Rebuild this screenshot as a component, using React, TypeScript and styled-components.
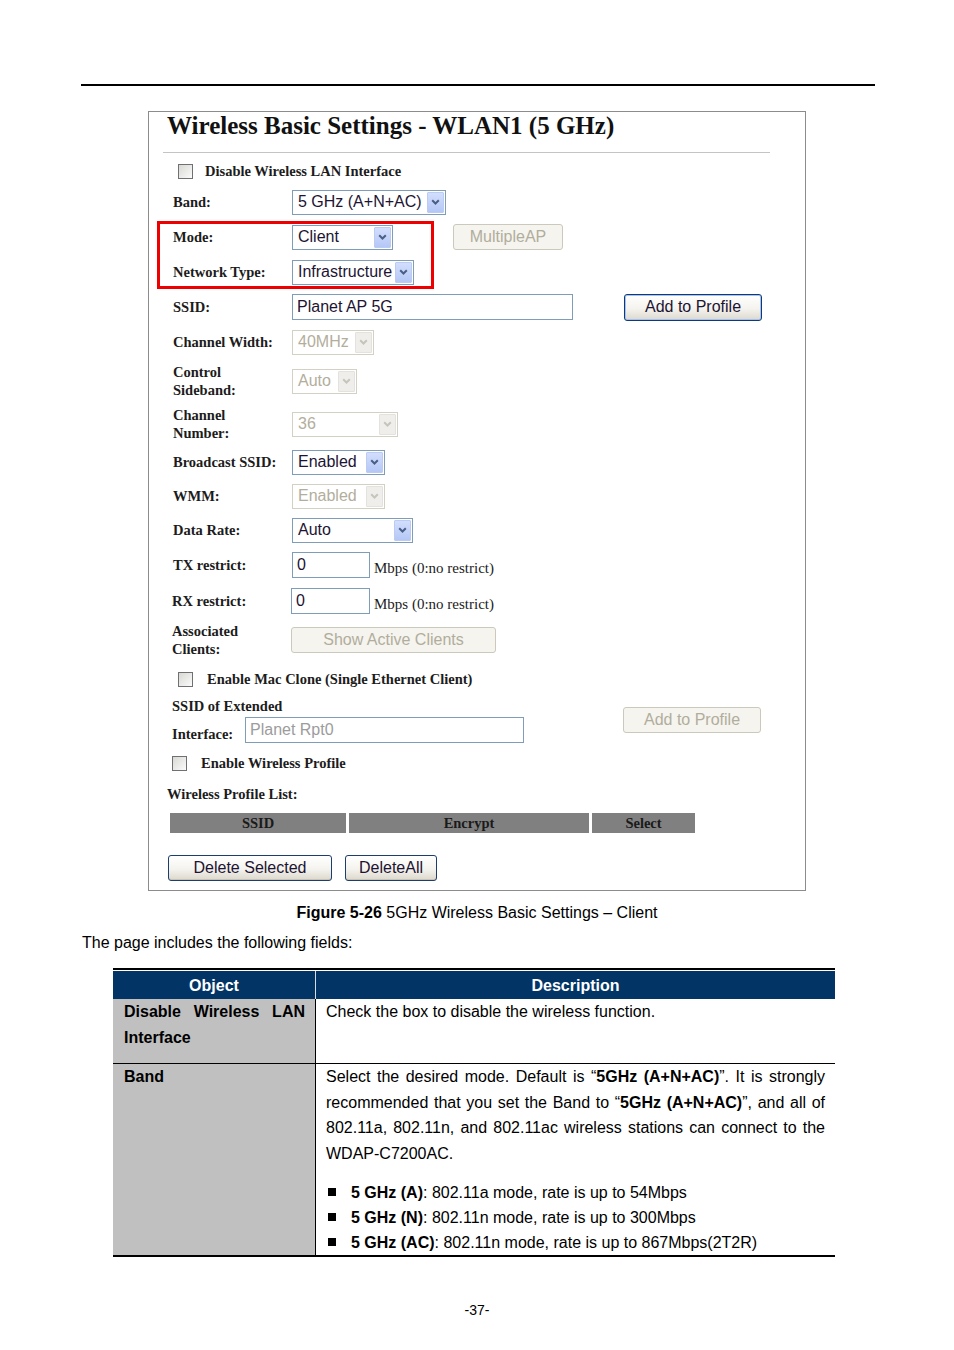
import React from "react";
import styled, { createGlobalStyle } from "styled-components";

const GlobalStyle = createGlobalStyle`
  html, body {
    margin: 0;
    padding: 0;
    background: #ffffff;
  }
  body {
    font-family: "Liberation Sans", Arial, sans-serif;
    color: #000;
  }
`;

const Page = styled.div`
  width: 954px;
  min-height: 1350px;
  padding-top: 84px;
  box-sizing: border-box;
`;

const TopRule = styled.div`
  margin-left: 81px;
  width: 794px;
  height: 2px;
  background: #000;
`;

/* ---------- screenshot panel ---------- */

const Panel = styled.div`
  margin: 25px 0 0 148px;
  width: 658px;
  height: 780px;
  box-sizing: border-box;
  border: 1px solid #8c8c8c;
  font-family: "Liberation Serif", "Times New Roman", serif;
  color: #1c1c1c;
`;

const Title = styled.h1`
  margin: 0;
  padding-left: 18px;
  font-size: 25px;
  line-height: 28px;
  font-weight: bold;
  color: #111;
`;

const TitleRule = styled.div`
  margin: 12px 0 0 14px;
  width: 607px;
  height: 1px;
  background: #c4c4c4;
`;

const Row = styled.div<{ $gap: number; $h?: number; $pad?: number }>`
  display: flex;
  align-items: center;
  margin-top: ${(p) => p.$gap}px;
  height: ${(p) => p.$h ?? 26}px;
  padding-left: ${(p) => p.$pad ?? 24}px;
`;

const Label = styled.div`
  width: 119px;
  flex-shrink: 0;
  font-size: 14.5px;
  line-height: 18px;
  font-weight: bold;
`;

// red annotation frame drawn over the Mode / Network Type rows
const Highlight = styled.div`
  position: relative;
  padding-top: 9px;
  &::after {
    content: "";
    position: absolute;
    left: 8px;
    top: 6px;
    width: 277px;
    height: 68px;
    box-sizing: border-box;
    border: 3px solid #ee0000;
    pointer-events: none;
  }
`;

const SelectBox = styled.div<{ $w: number; $disabled?: boolean }>`
  width: ${(p) => p.$w}px;
  height: 25px;
  box-sizing: border-box;
  border: 1px solid ${(p) => (p.$disabled ? "#d3d1c4" : "#7f9db9")};
  background: #fff;
  display: flex;
  align-items: center;
  justify-content: space-between;
  padding: 0 1px 0 5px;
  font-family: "Liberation Sans", Arial, sans-serif;
  font-size: 16px;
  font-weight: normal;
  color: ${(p) => (p.$disabled ? "#b3ae9c" : "#1d1433")};
  white-space: nowrap;
`;

const ArrowBox = styled.span<{ $disabled?: boolean }>`
  width: 17px;
  height: 21px;
  box-sizing: border-box;
  border: 1px solid ${(p) => (p.$disabled ? "#e3e2dc" : "#bccbf1")};
  border-radius: 1px;
  background: ${(p) =>
    p.$disabled ? "#efeeea" : "linear-gradient(#d3defd, #b4c7f6)"};
  display: flex;
  align-items: center;
  justify-content: center;
  flex-shrink: 0;
`;

const TextInput = styled.div<{ $w: number; $muted?: boolean }>`
  width: ${(p) => p.$w}px;
  height: 26px;
  box-sizing: border-box;
  border: 1px solid #7f9db9;
  background: #fff;
  padding-left: 4px;
  display: flex;
  align-items: center;
  font-family: "Liberation Sans", Arial, sans-serif;
  font-size: 16px;
  font-weight: normal;
  line-height: 20px;
  color: ${(p) => (p.$muted ? "#9c9c9c" : "#1d1433")};
  flex-shrink: 0;
`;

const Button = styled.div<{ $w: number; $disabled?: boolean; $ml?: number }>`
  width: ${(p) => p.$w}px;
  height: 26px;
  margin-left: ${(p) => p.$ml ?? 0}px;
  box-sizing: border-box;
  border: 1px solid ${(p) => (p.$disabled ? "#cbc9bc" : "#1c3d6e")};
  border-radius: 3px;
  background: ${(p) =>
    p.$disabled
      ? "#f5f4ee"
      : "linear-gradient(#ffffff, #f4f3ee 55%, #dcd8cd)"};
  box-shadow: ${(p) =>
    p.$disabled ? "none" : "inset 0 -1px 0 #c9c4b6"};
  display: flex;
  align-items: center;
  justify-content: center;
  font-family: "Liberation Sans", Arial, sans-serif;
  font-size: 16px;
  font-weight: normal;
  color: ${(p) => (p.$disabled ? "#b1ad9d" : "#1d1433")};
  flex-shrink: 0;
`;

const DefaultButton = styled(Button)`
  height: 27px;
  border-color: #0d3a7a;
  box-shadow: inset 0 0 0 1px #a9c1ee;
`;

const Unit = styled.span`
  margin: 6px 0 0 4px;
  font-size: 15px;
`;

const CheckRow = styled.div<{ $gap: number; $indent: number; $space: number }>`
  display: flex;
  align-items: center;
  height: 26px;
  margin-top: ${(p) => p.$gap}px;
  padding-left: ${(p) => p.$indent}px;
  gap: ${(p) => p.$space}px;
  font-size: 14.5px;
  font-weight: bold;
`;

const CheckBox = styled.span`
  width: 15px;
  height: 15px;
  box-sizing: border-box;
  border: 1px solid #6e7072;
  background: linear-gradient(135deg, #d8d8d4, #fbfbfb);
`;

const ExtBlock = styled.div`
  display: flex;
  align-items: flex-start;
  margin-top: 5px;
  height: 52px;
  padding-left: 23px;
`;

const ExtFields = styled.div`
  display: flex;
  flex-direction: column;
  font-size: 14.5px;
  font-weight: bold;
  line-height: 18px;
`;

const ExtLine = styled.div`
  display: flex;
  align-items: flex-end;
  margin-top: 2px;
`;

const ExtLabel = styled.span`
  width: 73px;
`;

const ExtButtonWrap = styled.div`
  margin: 10px 0 0 99px;
`;

const ListLabel = styled.div`
  margin-top: 5px;
  height: 26px;
  line-height: 26px;
  padding-left: 18px;
  font-size: 14.5px;
  font-weight: bold;
`;

const ProfileHead = styled.div`
  display: flex;
  gap: 3px;
  margin: 6px 0 0 21px;
`;

const HeadCell = styled.div<{ $w: number }>`
  width: ${(p) => p.$w}px;
  height: 20px;
  line-height: 21px;
  background: #808080;
  text-align: center;
  font-size: 14.5px;
  font-weight: bold;
  color: #1a1a1a;
`;

const ButtonBar = styled.div`
  display: flex;
  gap: 13px;
  margin: 22px 0 0 19px;
`;

/* ---------- document text ---------- */

const Caption = styled.div`
  margin-top: 12px;
  text-align: center;
  font-size: 16px;
  line-height: 20px;
  b {
    font-weight: bold;
  }
`;

const Para = styled.div`
  margin: 10px 0 0 82px;
  font-size: 16px;
  line-height: 20px;
`;

const DocTable = styled.div`
  margin: 15px 0 0 113px;
  width: 722px;
  border-top: 2px solid #000;
  padding-top: 1px;
  display: grid;
  grid-template-columns: 202px 520px;
  font-size: 16px;
`;

const DocHead = styled.div<{ $divider?: boolean }>`
  height: 28px;
  line-height: 29px;
  background: #023466;
  color: #fff;
  font-weight: bold;
  text-align: center;
  border-left: ${(p) => (p.$divider ? "1px solid #d6dbe4" : "none")};
`;

const ObjCell = styled.div<{ $h: number; $last?: boolean }>`
  height: ${(p) => p.$h}px;
  background: #c0c0c0;
  padding: 0 10px 0 11px;
  font-weight: bold;
  line-height: 26px;
  border-bottom: ${(p) => (p.$last ? "2px" : "1px")} solid #000;
`;

const DescCell = styled.div<{ $h: number; $last?: boolean }>`
  height: ${(p) => p.$h}px;
  border-left: 1px solid #000;
  padding: 0 10px 0 10px;
  line-height: 26px;
  border-bottom: ${(p) => (p.$last ? "2px" : "1px")} solid #000;
`;

const JustLine = styled.span`
  display: block;
  text-align: justify;
  text-align-last: justify;
`;

const PlainLine = styled.span`
  display: block;
  line-height: 25.7px;
`;

const BandPara = styled.div`
  line-height: 25.7px;
  ${JustLine} {
    line-height: 25.7px;
  }
`;

const Bullets = styled.ul`
  list-style: none;
  margin: 13px 0 0 0;
  padding: 0;
`;

const Bullet = styled.li`
  display: flex;
  align-items: center;
  line-height: 25px;
  padding-left: 2px;
  &::before {
    content: "";
    width: 8px;
    height: 8px;
    background: #000;
    margin-right: 15px;
    flex-shrink: 0;
  }
`;

const PageNo = styled.div`
  margin-top: 45px;
  text-align: center;
  font-size: 14px;
  line-height: 16px;
`;

const Chevron: React.FC<{ disabled?: boolean }> = ({ disabled }) => (
  <svg width="9" height="6" viewBox="0 0 9 6">
    <path
      d="M1.2 1.2 L4.5 4.5 L7.8 1.2"
      fill="none"
      stroke={disabled ? "#c6c4bb" : "#4a5f86"}
      strokeWidth="2"
    />
  </svg>
);

const Select: React.FC<{ w: number; value: string; disabled?: boolean }> = ({
  w,
  value,
  disabled,
}) => (
  <SelectBox $w={w} $disabled={disabled}>
    <span>{value}</span>
    <ArrowBox $disabled={disabled}>
      <Chevron disabled={disabled} />
    </ArrowBox>
  </SelectBox>
);

const App: React.FC = () => {
  return (
    <>
      <GlobalStyle />
      <Page>
        <TopRule />
        <Panel>
          <Title>Wireless Basic Settings - WLAN1 (5 GHz)</Title>
          <TitleRule />

          <CheckRow $gap={5} $indent={29} $space={12}>
            <CheckBox />
            Disable Wireless LAN Interface
          </CheckRow>

          <Row $gap={5}>
            <Label>Band:</Label>
            <Select w={154} value="5 GHz (A+N+AC)" />
          </Row>

          <Highlight>
            <Row $gap={0}>
              <Label>Mode:</Label>
              <Select w={101} value="Client" />
              <Button $w={110} $ml={60} $disabled>
                MultipleAP
              </Button>
            </Row>
            <Row $gap={9}>
              <Label>Network Type:</Label>
              <Select w={122} value="Infrastructure" />
            </Row>
          </Highlight>

          <Row $gap={9}>
            <Label>SSID:</Label>
            <TextInput $w={281}>Planet AP 5G</TextInput>
            <DefaultButton $w={138} $ml={51}>
              Add to Profile
            </DefaultButton>
          </Row>

          <Row $gap={9}>
            <Label>Channel Width:</Label>
            <Select w={82} value="40MHz" disabled />
          </Row>

          <Row $gap={8} $h={36}>
            <Label>
              Control
              <br />
              Sideband:
            </Label>
            <Select w={65} value="Auto" disabled />
          </Row>

          <Row $gap={7} $h={36}>
            <Label>
              Channel
              <br />
              Number:
            </Label>
            <Select w={106} value="36" disabled />
          </Row>

          <Row $gap={7}>
            <Label>Broadcast SSID:</Label>
            <Select w={93} value="Enabled" />
          </Row>

          <Row $gap={8}>
            <Label>WMM:</Label>
            <Select w={93} value="Enabled" disabled />
          </Row>

          <Row $gap={8}>
            <Label>Data Rate:</Label>
            <Select w={121} value="Auto" />
          </Row>

          <Row $gap={9}>
            <Label>TX restrict:</Label>
            <TextInput $w={78}>0</TextInput>
            <Unit>Mbps (0:no restrict)</Unit>
          </Row>

          <Row $gap={10} $pad={23}>
            <Label>RX restrict:</Label>
            <TextInput $w={79}>0</TextInput>
            <Unit>Mbps (0:no restrict)</Unit>
          </Row>

          <Row $gap={8} $h={36} $pad={23}>
            <Label>
              Associated
              <br />
              Clients:
            </Label>
            <Button $w={205} $disabled>
              Show Active Clients
            </Button>
          </Row>

          <CheckRow $gap={8} $indent={29} $space={14}>
            <CheckBox />
            Enable Mac Clone (Single Ethernet Client)
          </CheckRow>

          <ExtBlock>
            <ExtFields>
              <span>SSID of Extended</span>
              <ExtLine>
                <ExtLabel>Interface:</ExtLabel>
                <TextInput $w={279} $muted>
                  Planet Rpt0
                </TextInput>
              </ExtLine>
            </ExtFields>
            <ExtButtonWrap>
              <Button $w={138} $disabled>
                Add to Profile
              </Button>
            </ExtButtonWrap>
          </ExtBlock>

          <CheckRow $gap={1} $indent={23} $space={14}>
            <CheckBox />
            Enable Wireless Profile
          </CheckRow>

          <ListLabel>Wireless Profile List:</ListLabel>

          <ProfileHead>
            <HeadCell $w={176}>SSID</HeadCell>
            <HeadCell $w={240}>Encrypt</HeadCell>
            <HeadCell $w={103}>Select</HeadCell>
          </ProfileHead>

          <ButtonBar>
            <Button $w={164}>Delete Selected</Button>
            <Button $w={92}>DeleteAll</Button>
          </ButtonBar>
        </Panel>

        <Caption>
          <b>Figure 5-26</b> 5GHz Wireless Basic Settings – Client
        </Caption>
        <Para>The page includes the following fields:</Para>

        <DocTable>
          <DocHead>Object</DocHead>
          <DocHead $divider>Description</DocHead>

          <ObjCell $h={64}>
            <JustLine>Disable Wireless LAN</JustLine>
            <span>Interface</span>
          </ObjCell>
          <DescCell $h={64}>
            Check the box to disable the wireless function.
          </DescCell>

          <ObjCell $h={191} $last>
            <PlainLine>Band</PlainLine>
          </ObjCell>
          <DescCell $h={191} $last>
            <BandPara>
              <JustLine>
                Select the desired mode. Default is “<b>5GHz (A+N+AC)</b>”. It
                is strongly
              </JustLine>
              <JustLine>
                recommended that you set the Band to “<b>5GHz (A+N+AC)</b>”, and
                all of
              </JustLine>
              <JustLine>
                802.11a, 802.11n, and 802.11ac wireless stations can connect to
                the
              </JustLine>
              <PlainLine>WDAP-C7200AC.</PlainLine>
            </BandPara>
            <Bullets>
              <Bullet>
                <span>
                  <b>5 GHz (A)</b>: 802.11a mode, rate is up to 54Mbps
                </span>
              </Bullet>
              <Bullet>
                <span>
                  <b>5 GHz (N)</b>: 802.11n mode, rate is up to 300Mbps
                </span>
              </Bullet>
              <Bullet>
                <span>
                  <b>5 GHz (AC)</b>: 802.11n mode, rate is up to 867Mbps(2T2R)
                </span>
              </Bullet>
            </Bullets>
          </DescCell>
        </DocTable>

        <PageNo>-37-</PageNo>
      </Page>
    </>
  );
};

export default App;
